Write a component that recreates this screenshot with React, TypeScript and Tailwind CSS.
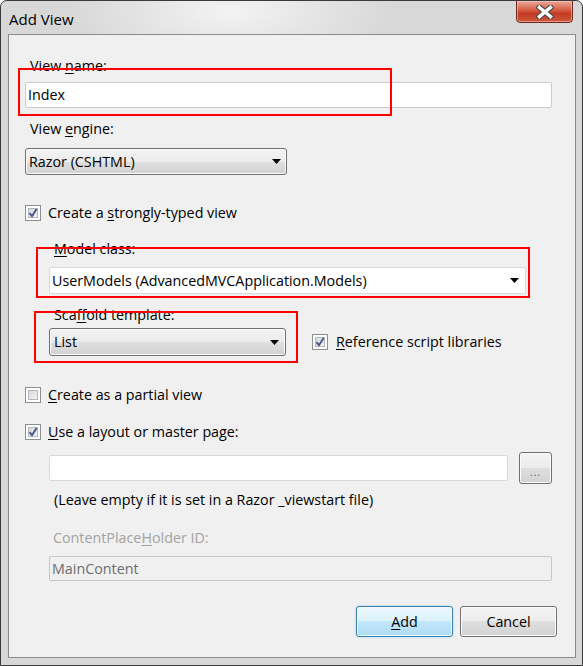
import React from "react"

// Windows 7 style "Add View" dialog

function Arrow() {
  return (
    <svg width="9" height="5" viewBox="0 0 9 5" className="shrink-0">
      <path d="M0 0 H9 L4.5 5 Z" fill="#000" />
    </svg>
  )
}

function CheckBox({ checked }: { checked?: boolean }) {
  return (
    <div className="relative w-[16px] h-[16px] shrink-0 border border-[#8e8f8f] bg-white p-[2px]">
      <div className="w-full h-full border border-[#b4b8be] bg-[linear-gradient(135deg,#d4d7dc,#f5f5f5)]" />
      {checked && (
        <svg width="14" height="14" viewBox="0 0 14 14" className="absolute left-[0px] top-[0px]">
          <path d="M3.5 7.2 L6 10.2 L10.6 3" fill="none" stroke="#44558c" strokeWidth="1.9" />
        </svg>
      )}
    </div>
  )
}

function Key({ children }: { children: React.ReactNode }) {
  return <span className="underline underline-offset-[2px] decoration-1">{children}</span>
}

const dropBg =
  "border border-[#707070] rounded-[3px] bg-[linear-gradient(#f3f3f3,#ececec_50%,#dfdfdf_50%,#d2d2d2)] shadow-[inset_0_0_0_1px_#fcfcfc]"

export default function App() {
  return (
    <div className="relative w-[583px] h-[666px] flex flex-col border border-[#3a3a3a] rounded-t-[7px] bg-[radial-gradient(ellipse_160px_60px_at_230px_10px,#f3f3f3,#d8d8d8)] font-['Open_Sans',sans-serif] text-[14.3px] leading-[20px] text-black overflow-hidden">
      {/* Title bar */}
      <div className="h-[33px] flex items-start justify-between shrink-0">
        <span className="ml-[8px] mt-[8px] text-[15px]">Add View</span>
        <div className="-mt-[1px] mr-[9px] w-[57px] h-[23px] rounded-b-[4px] border border-[#6b2a20] bg-[linear-gradient(#e9a99b,#d5593f_45%,#c23b22_60%,#d0583a)] shadow-[inset_0_0_0_1px_rgba(255,220,210,0.5)] flex items-center justify-center">
          <svg width="18" height="14" viewBox="0 0 18 14">
            <path d="M3.5 2.5 L14.5 11.5 M14.5 2.5 L3.5 11.5" stroke="#4a4a4a" strokeWidth="5.6" strokeLinecap="square" />
            <path d="M3.5 2.5 L14.5 11.5 M14.5 2.5 L3.5 11.5" stroke="#fff" strokeWidth="3.4" strokeLinecap="square" />
          </svg>
        </div>
      </div>

      {/* Client area */}
      <div className="flex-1 ml-[7px] mr-[6px] mb-[7px] border border-[#8a8a8a] bg-[#f0f0f0] pl-[16px] pr-[23px] flex flex-col">
        <div className="mt-[21px] ml-[5px]">
          View <Key>n</Key>ame:
        </div>
        <div className="mt-[6px] h-[26px] bg-white border border-[#c9ccd1] rounded-[2px] pl-[2px] flex items-center">Index</div>

        <div className="mt-[11px] ml-[5px]">
          View <Key>e</Key>ngine:
        </div>
        <div className={`mt-[9px] w-[262px] h-[27px] ${dropBg} pl-[3px] pr-[5px] flex items-center justify-between`}>
          <span>Razor (CSHTML)</span>
          <Arrow />
        </div>

        <div className="mt-[28px] flex items-center gap-[7px] h-[20px]">
          <CheckBox checked />
          <span>
            Create a <Key>s</Key>trongly-typed view
          </span>
        </div>

        <div className="ml-[24px] flex flex-col">
          <div className="mt-[16px] ml-[5px]">
            <Key>M</Key>odel class:
          </div>
          <div className="mt-[8px] mr-[26px] h-[27px] bg-white border border-[#d6d9dd] rounded-[2px] pl-[2px] pr-[6px] flex items-center justify-between">
            <span>UserModels (AdvancedMVCApplication.Models)</span>
            <Arrow />
          </div>

          <div className="mt-[11px] ml-[5px]">
            Sca<Key>f</Key>fold template:
          </div>
          <div className="mt-[3px] flex items-center">
            <div className={`w-[237px] h-[28px] ${dropBg} pl-[4px] pr-[6px] flex items-center justify-between`}>
              <span>List</span>
              <Arrow />
            </div>
            <div className="ml-[26px] flex items-center gap-[8px]">
              <CheckBox checked />
              <span>
                <Key>R</Key>eference script libraries
              </span>
            </div>
          </div>
        </div>

        <div className="mt-[29px] flex items-center gap-[7px] h-[20px]">
          <CheckBox />
          <span>
            <Key>C</Key>reate as a partial view
          </span>
        </div>

        <div className="mt-[17px] flex items-center gap-[7px] h-[20px]">
          <CheckBox checked />
          <span>
            <Key>U</Key>se a layout or master page:
          </span>
        </div>

        <div className="ml-[24px] flex flex-col">
          <div className="mt-[10px] flex items-center">
            <div className="flex-1 h-[26px] bg-white border border-[#d6d9dd] rounded-[2px]" />
            <div className={`ml-[11px] w-[33px] h-[32px] ${dropBg} flex items-end justify-center pb-[6px]`}>
              <span className="text-[10px] leading-[10px] text-[#3b5a86] tracking-[1px]">...</span>
            </div>
          </div>
          <div className="mt-[6px] ml-[5px]">(Leave empty if it is set in a Razor _viewstart file)</div>

          <div className="mt-[18px] ml-[4px] text-[#a3a3a3]">
            ContentPlace<Key>H</Key>older ID:
          </div>
          <div className="mt-[8px] h-[25px] border border-[#c8c8c8] rounded-[2px] bg-[#f0f0f0] pl-[2px] flex items-center text-[#6d6d6d]">
            MainContent
          </div>
        </div>

        <div className="mt-[25px] -mr-[5px] flex justify-end gap-[7px]">
          <div className="w-[97px] h-[31px] rounded-[3px] border border-[#3c7fb1] bg-[linear-gradient(#ecf7fd,#dcf1fc_50%,#c3e7fc_50%,#aedbf4)] shadow-[inset_0_0_0_1px_#f4fbff,0_0_2px_#7fcff5] flex items-center justify-center">
            <span>
              <Key>A</Key>dd
            </span>
          </div>
          <div className={`w-[97px] h-[31px] ${dropBg} flex items-center justify-center`}>Cancel</div>
        </div>
      </div>

      {/* Annotation boxes */}
      <div className="absolute left-[17px] top-[67px] w-[374px] h-[48px] border-2 border-[#f00]" />
      <div className="absolute left-[35px] top-[246px] w-[494px] h-[51px] border-2 border-[#f00]" />
      <div className="absolute left-[33px] top-[310px] w-[264px] h-[52px] border-2 border-[#f00]" />
    </div>
  )
}
